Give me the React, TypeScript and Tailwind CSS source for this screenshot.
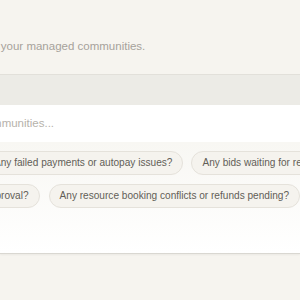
export default function App() {
  return (
    <main className="w-[300px] h-[300px] overflow-hidden bg-[#f6f4ef] font-['Liberation_Sans',Arial,sans-serif]">
      <section className="h-[74px] pt-[38px]">
        <p className="whitespace-nowrap text-[11.5px] leading-[16px] text-[#a6a29b] -ml-[104px]">
          Get answers across your managed communities.
        </p>
      </section>

      <div className="h-[31px] border-t border-[#e2e0da] bg-[#ecebe6]" />

      <div className="bg-white border-b border-[#d9d7d1] shadow-[0_1px_2px_rgba(0,0,0,0.05)]">
        <div className="h-[37px] flex items-center">
          <span className="whitespace-nowrap text-[11.5px] text-[#b6b2ab] -ml-[100px]">
            Ask about your communities...
          </span>
        </div>

        <div className="pt-[9px] pb-[45px] flex flex-col gap-[9px] bg-gradient-to-b from-[#f8f7f3] to-white">
          <div className="flex gap-[8px] -ml-[17px] whitespace-nowrap">
            <Chip>Any failed payments or autopay issues?</Chip>
            <Chip>Any bids waiting for review from vendors?</Chip>
          </div>
          <div className="flex gap-[9px] -ml-[125px] whitespace-nowrap">
            <Chip>Any invoices pending approval?</Chip>
            <Chip>Any resource booking conflicts or refunds pending?</Chip>
          </div>
        </div>
      </div>
    </main>
  );
}

function Chip({ children }: { children: React.ReactNode }) {
  return (
    <button className="h-[24px] shrink-0 flex items-center px-[10px] rounded-full border border-[#e5e2db] bg-[#f5f3ee] text-[10.1px] leading-[12px] text-[#625e57]">
      {children}
    </button>
  );
}
